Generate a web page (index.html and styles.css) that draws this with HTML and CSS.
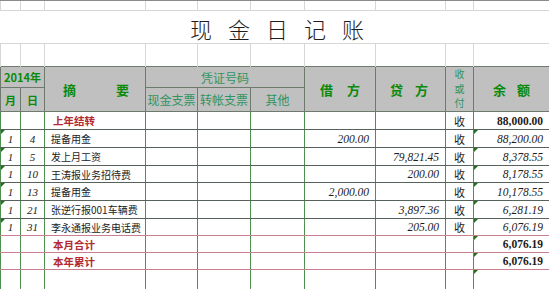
FILE: index.html
```html
<!DOCTYPE html>
<html lang="zh-CN">
<head>
    <meta charset="UTF-8">
    <meta name="viewport" content="width=device-width, initial-scale=1.0">
    <title>现金日记账</title>
    <link rel="stylesheet" href="styles.css">
</head>
<body>
    <table class="ledger">
        <colgroup>
            <col style="width: 20px">
            <col style="width: 24px">
            <col style="width: 101px">
            <col style="width: 52px">
            <col style="width: 53px">
            <col style="width: 54px">
            <col style="width: 71px">
            <col style="width: 70px">
            <col style="width: 28px">
            <col style="width: 76px">
        </colgroup>
        <tbody>
            <tr class="row-top">
                <td></td><td></td><td></td><td></td><td></td><td></td><td></td><td></td><td></td><td></td>
            </tr>
            <tr class="row-title">
                <td colspan="10"><span class="title">现金日记账</span></td>
            </tr>
            <tr class="row-blank">
                <td></td><td></td><td></td><td></td><td></td><td></td><td></td><td></td><td></td><td></td>
            </tr>
            <tr class="head-1">
                <th colspan="2" class="year">2014年</th>
                <th rowspan="2" class="big"><div class="spread pad-zy"><span>摘</span><span>要</span></div></th>
                <th colspan="3" class="sub">凭证号码</th>
                <th rowspan="2" class="big"><div class="spread pad-jf"><span>借</span><span>方</span></div></th>
                <th rowspan="2" class="big"><div class="spread pad-df"><span>贷</span><span>方</span></div></th>
                <th rowspan="2" class="sub stack"><div>收</div><div>或</div><div>付</div></th>
                <th rowspan="2" class="big"><div class="spread pad-ye"><span>余</span><span>额</span></div></th>
            </tr>
            <tr class="head-2">
                <th class="year">月</th>
                <th class="year">日</th>
                <th class="sub">现金支票</th>
                <th class="sub">转帐支票</th>
                <th class="sub">其他</th>
            </tr>
        </tbody>
        <tbody class="data">
            <tr class="h18">
                <td></td><td></td>
                <td class="desc red">上年结转</td>
                <td></td><td></td><td></td><td></td><td></td>
                <td class="dir">收</td>
                <td class="num bold">88,000.00</td>
            </tr>
            <tr class="h18">
                <td class="date mark">1</td><td class="date">4</td>
                <td class="desc">提备用金</td>
                <td></td><td></td><td></td>
                <td class="num">200.00</td><td></td>
                <td class="dir">收</td>
                <td class="num mark">88,200.00</td>
            </tr>
            <tr class="h18">
                <td class="date mark">1</td><td class="date">5</td>
                <td class="desc">发上月工资</td>
                <td></td><td></td><td></td><td></td>
                <td class="num">79,821.45</td>
                <td class="dir">收</td>
                <td class="num mark">8,378.55</td>
            </tr>
            <tr class="h17">
                <td class="date mark">1</td><td class="date">10</td>
                <td class="desc">王涛报业务招待费</td>
                <td></td><td></td><td></td><td></td>
                <td class="num">200.00</td>
                <td class="dir">收</td>
                <td class="num mark">8,178.55</td>
            </tr>
            <tr class="h18">
                <td class="date mark">1</td><td class="date">13</td>
                <td class="desc">提备用金</td>
                <td></td><td></td><td></td>
                <td class="num">2,000.00</td><td></td>
                <td class="dir">收</td>
                <td class="num mark">10,178.55</td>
            </tr>
            <tr class="h18">
                <td class="date mark">1</td><td class="date">21</td>
                <td class="desc">张逆行报001车辆费</td>
                <td></td><td></td><td></td><td></td>
                <td class="num">3,897.36</td>
                <td class="dir">收</td>
                <td class="num mark">6,281.19</td>
            </tr>
            <tr class="h17 pink-bottom">
                <td class="date mark">1</td><td class="date">31</td>
                <td class="desc">李永通报业务电话费</td>
                <td></td><td></td><td></td><td></td>
                <td class="num">205.00</td>
                <td class="dir">收</td>
                <td class="num mark">6,076.19</td>
            </tr>
            <tr class="h17 pink-bottom">
                <td></td><td></td>
                <td class="desc red">本月合计</td>
                <td></td><td></td><td></td><td></td><td></td><td></td>
                <td class="num bold mark">6,076.19</td>
            </tr>
            <tr class="h17 pink-bottom">
                <td></td><td></td>
                <td class="desc red">本年累计</td>
                <td></td><td></td><td></td><td></td><td></td><td></td>
                <td class="num bold mark">6,076.19</td>
            </tr>
            <tr class="h20 open">
                <td></td><td></td><td></td><td></td><td></td><td></td><td></td><td></td><td></td>
                <td class="mark"></td>
            </tr>
        </tbody>
    </table>
</body>
</html>
```

FILE: styles.css
```css
body {
    margin: 0;
    background: #ffffff;
    font-family: "Noto Sans CJK SC", "Noto Sans", sans-serif;
    overflow: hidden;
}

.ledger {
    width: 549px;
    table-layout: fixed;
    border-collapse: collapse;
}

.ledger td,
.ledger th {
    padding: 0;
    overflow: hidden;
    white-space: nowrap;
}

/* sheet rows above the table header */
.row-top td {
    height: 9px;
    border-top: 1px solid #8c8c8c;
    border-left: 1px solid #d4d9d4;
}

.row-title td {
    height: 31px;
    border-top: 1px solid #d4d9d4;
    text-align: center;
}

.title {
    font-size: 22px;
    letter-spacing: 16px;
    margin-right: -16px;
    color: #1e1e1e;
    font-weight: 300;
    position: relative;
    top: 1px;
    left: 2px;
}

.row-blank td {
    height: 22px;
    border-top: 1px solid #d4d9d4;
    border-left: 1px solid #d4d9d4;
}

/* header */
.ledger th {
    background: #c0c0c0;
    border: 1px solid #6e7a6e;
    color: #0a8a0a;
    font-weight: 700;
}

.head-1 th {
    height: 20px;
}

.head-2 th {
    height: 23px;
}

.year {
    font-size: 11px;
}

.big {
    font-size: 13px;
}

.sub {
    font-size: 12px;
    font-weight: 400 !important;
    color: #2f9460 !important;
}

.stack {
    font-size: 10px !important;
}

.stack div {
    line-height: 14.5px;
}

.spread {
    display: flex;
    justify-content: space-between;
}

.pad-zy { padding: 0 16px 0 18px; }
.pad-jf { padding: 0 15px 0 15px; }
.pad-df { padding: 0 17px 0 14px; }
.pad-ye { padding: 0 19px 0 19px; }

/* data rows */
.data td {
    border-left: 1px solid #4f8f4f;
    border-right: 1px solid #4f8f4f;
    border-bottom: 1px solid #56625a;
    font-size: 11px;
    color: #1c1c1c;
    position: relative;
}

.h18 td { height: 17px; }
.h17 td { height: 16px; }
.h20 td { height: 20px; }

.data .pink-bottom td {
    border-bottom: 1px solid #c9808c;
}

.data .open td {
    border-bottom: none;
}

.date {
    text-align: center;
    font-family: "Liberation Serif", serif;
    font-style: italic;
}

.data .desc {
    padding-left: 6px;
    font-size: 10px;
}

.data .red {
    color: #b32a2f;
    font-weight: 700;
    font-size: 10.5px;
    padding-left: 8px;
}

.data .num {
    text-align: right;
    padding-right: 6px;
    font-family: "Liberation Serif", serif;
    font-style: italic;
    font-size: 11.5px;
}

.data .num.bold {
    font-style: normal;
    font-weight: 700;
}

.dir {
    text-align: center;
    font-size: 11px;
}

/* spreadsheet error marker */
.mark::before {
    content: "";
    position: absolute;
    top: 0;
    left: 0;
    border-top: 4px solid #1f6f1f;
    border-right: 4px solid transparent;
}
```
